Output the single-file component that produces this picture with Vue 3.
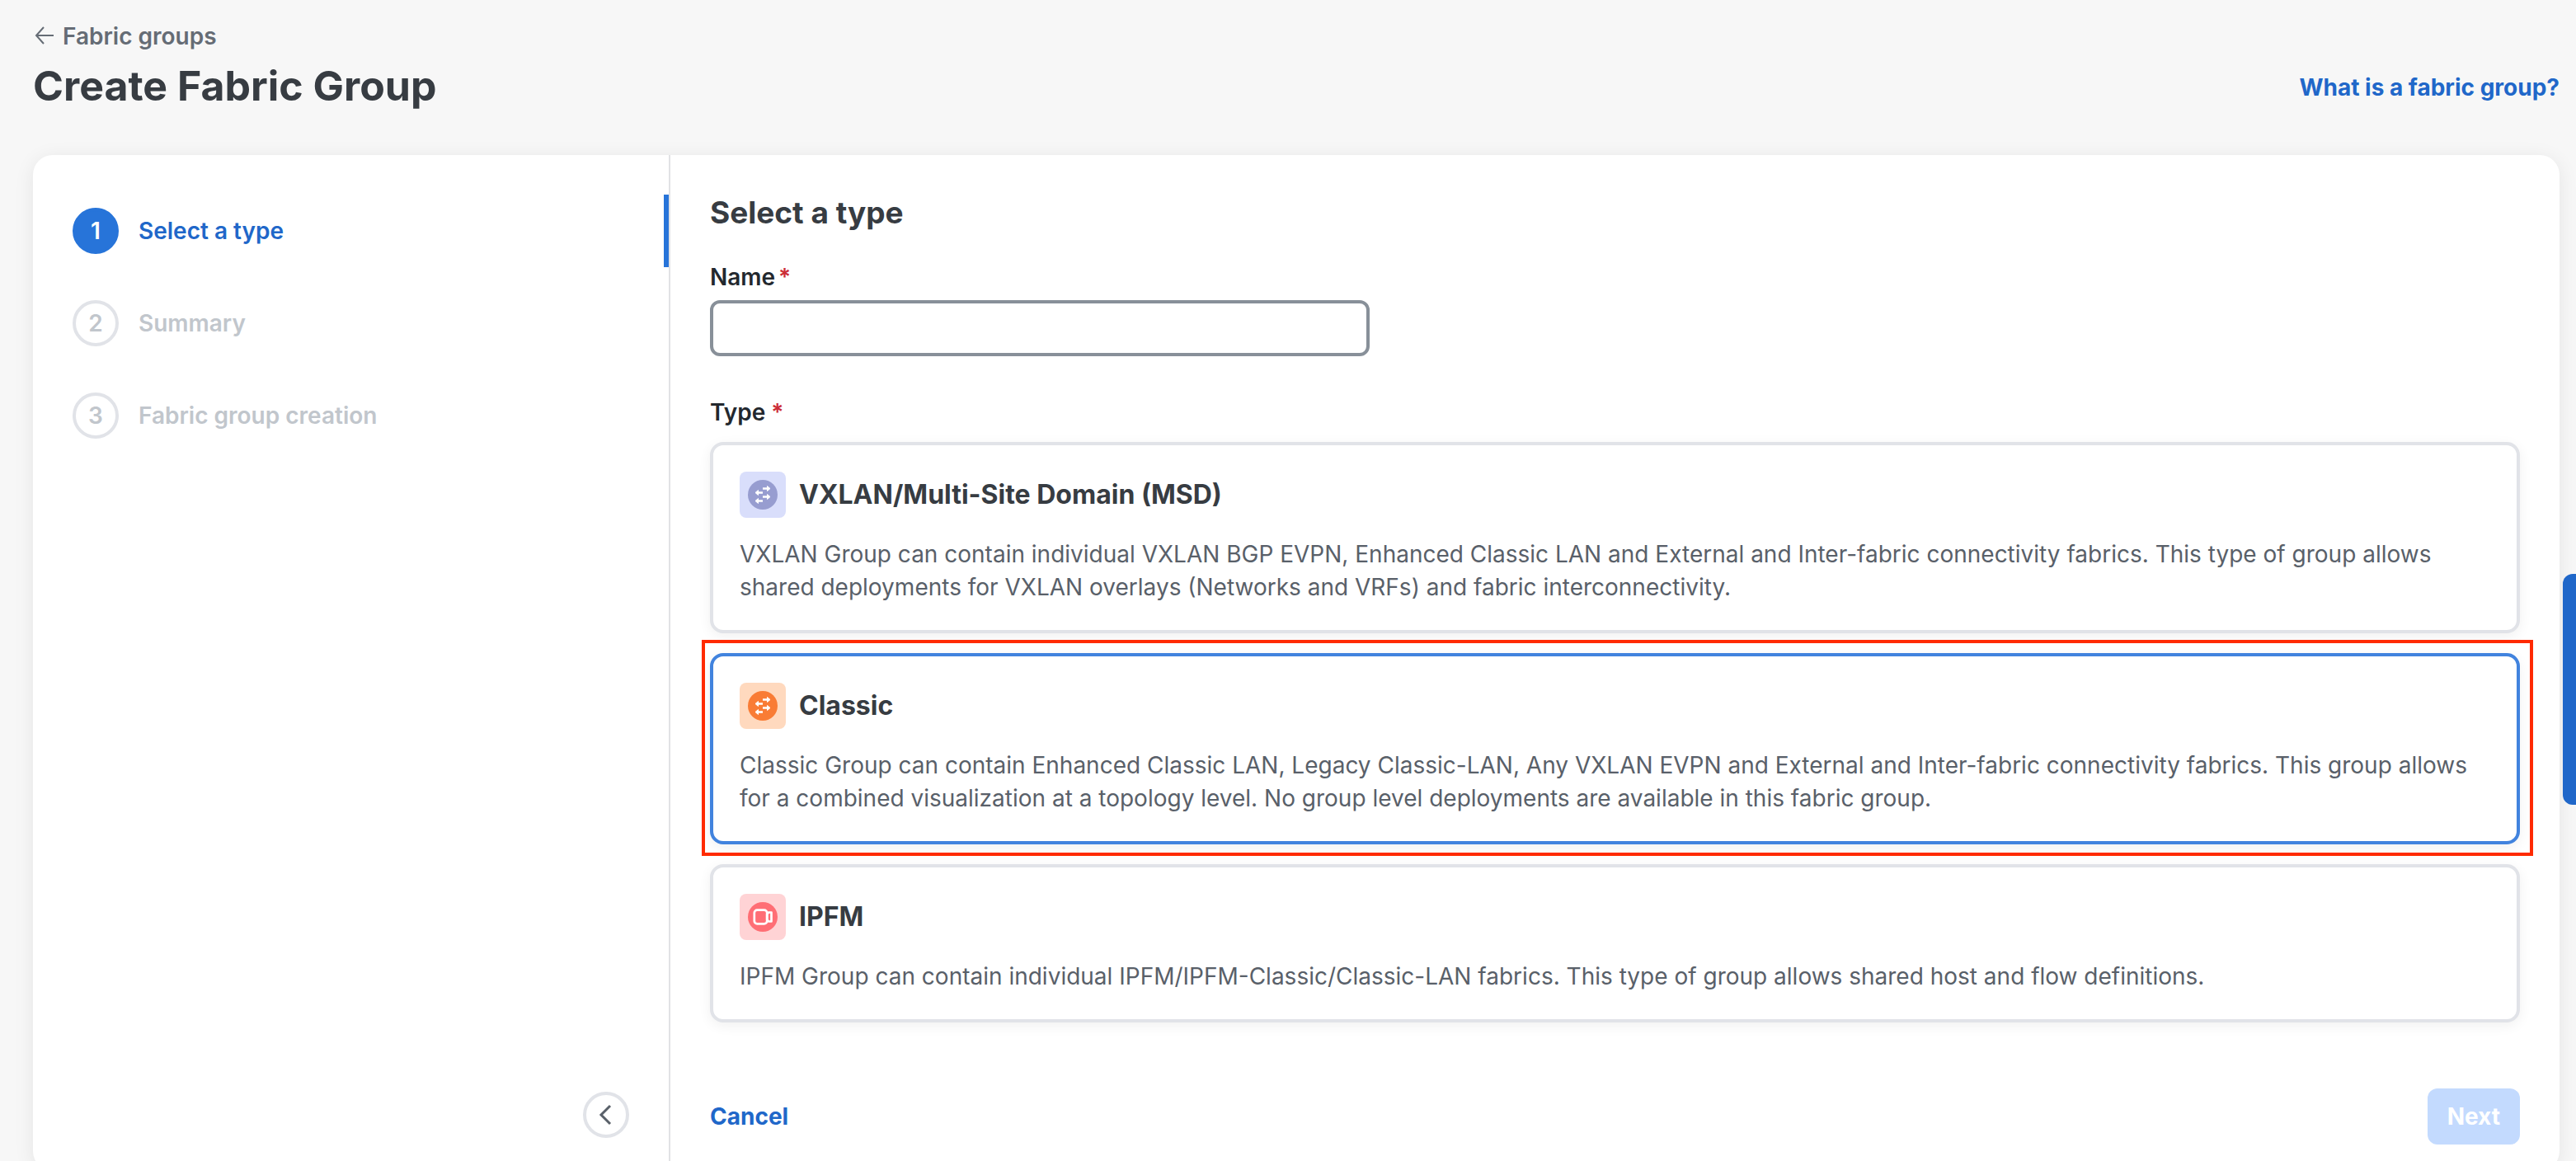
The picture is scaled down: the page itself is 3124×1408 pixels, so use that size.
<script setup>
import { ref } from "vue";

const steps = ["Select a type", "Summary", "Fabric group creation"];
const currentStep = ref(0);

const groupName = ref("");
const selectedType = ref("classic");

const groupTypes = [
  {
    id: "vxlan",
    title: "VXLAN/Multi-Site Domain (MSD)",
    icon: "arrows",
    description:
      "VXLAN Group can contain individual VXLAN BGP EVPN, Enhanced Classic LAN and External and Inter-fabric connectivity fabrics. This type of group allows shared deployments for VXLAN overlays (Networks and VRFs) and fabric interconnectivity.",
  },
  {
    id: "classic",
    title: "Classic",
    icon: "arrows",
    description:
      "Classic Group can contain Enhanced Classic LAN, Legacy Classic-LAN, Any VXLAN EVPN and External and Inter-fabric connectivity fabrics. This group allows for a combined visualization at a topology level. No group level deployments are available in this fabric group.",
  },
  {
    id: "ipfm",
    title: "IPFM",
    icon: "camera",
    description:
      "IPFM Group can contain individual IPFM/IPFM-Classic/Classic-LAN fabrics. This type of group allows shared host and flow definitions.",
  },
];
</script>

<template>
  <div class="page">
    <header class="page-header">
      <div>
        <a class="back-link" href="#">
          <svg class="back-icon" viewBox="0 0 28 28" aria-hidden="true">
            <path d="M25 13H4M13 3L4 13l9 10" />
          </svg>
          Fabric groups
        </a>
        <h1 class="page-title">Create Fabric Group</h1>
      </div>
      <a class="link" href="#">What is a fabric group?</a>
    </header>

    <div class="panel">
      <nav class="sidebar" aria-label="Steps">
        <ol class="steps">
          <li v-for="(step, index) in steps" :key="step" class="step" :class="{ 'step--active': index === currentStep }">
            <span class="step-number">{{ index + 1 }}</span>
            <span>{{ step }}</span>
          </li>
        </ol>
        <button type="button" class="collapse" aria-label="Collapse steps">
          <svg viewBox="0 0 28 28" aria-hidden="true">
            <path d="M19 3L8 14l11 11" />
          </svg>
        </button>
      </nav>

      <form class="main" @submit.prevent>
        <h2 class="main-title">Select a type</h2>

        <label class="label" for="group-name">Name<span class="required required--tight">*</span></label>
        <input id="group-name" v-model="groupName" class="name-input" type="text" />

        <fieldset class="types">
          <legend class="label">Type <span class="required">*</span></legend>
          <label
            v-for="type in groupTypes"
            :key="type.id"
            class="card"
            :class="[`card--${type.id}`, { 'card--selected': selectedType === type.id }]"
          >
            <input v-model="selectedType" class="card-radio" type="radio" name="group-type" :value="type.id" />
            <span class="card-head">
              <span class="card-icon">
                <svg viewBox="0 0 36 36" aria-hidden="true">
                  <circle cx="18" cy="18" r="18" fill="currentColor" />
                  <g v-if="type.icon === 'arrows'" fill="none" stroke="#fff" stroke-width="2.5">
                    <path d="M18 10.5h6M18 15.5h-6M18 20.5h6M18 25.5h-6" />
                    <path
                      d="M23.5 7.5l3.5 3-3.5 3zM12.5 12.5l-3.5 3 3.5 3zM23.5 17.5l3.5 3-3.5 3zM12.5 22.5l-3.5 3 3.5 3z"
                      fill="#fff"
                      stroke-width="1"
                      stroke-linejoin="round"
                    />
                  </g>
                  <g v-else fill="none" stroke="#fff" stroke-width="2.7" stroke-linejoin="round">
                    <rect x="7.8" y="9.6" width="15.4" height="16.8" rx="3.5" />
                    <path d="M23.2 14.5l2-2h3.3v11h-3.3l-2-2z" />
                  </g>
                </svg>
              </span>
              <span class="card-title">{{ type.title }}</span>
            </span>
            <span class="card-text">{{ type.description }}</span>
          </label>
        </fieldset>

        <div class="actions">
          <a class="link" href="#">Cancel</a>
          <button type="submit" class="next" :disabled="!groupName">Next</button>
        </div>
      </form>
    </div>

    <button type="button" class="side-tab" aria-label="Open help"></button>
  </div>
</template>

<style>
body {
  background: #f7f7f7;
}
</style>

<style scoped>
.page {
  display: flex;
  flex-direction: column;
  box-sizing: border-box;
  height: 100vh;
  padding: 24px 20px 0 40px;
  overflow: hidden;
  color: #373c42;
  font-family: Inter, "Liberation Sans", sans-serif;
  font-size: 28px;
  line-height: 40px;
}

.page-header {
  display: flex;
  flex-shrink: 0;
  align-items: flex-end;
  justify-content: space-between;
  padding-bottom: 56px;
}

.back-link {
  display: flex;
  align-items: center;
  gap: 8px;
  color: #656c75;
  font-weight: 600;
  text-decoration: none;
}

.back-icon {
  width: 28px;
  height: 28px;
  fill: none;
  stroke: currentColor;
  stroke-width: 2;
}

.page-title {
  margin: 12px 0 0;
  font-size: 50px;
  font-weight: 700;
  line-height: 56px;
}

.link {
  color: #2067c9;
  font-weight: 700;
  line-height: 52px;
  text-decoration: none;
}

/* Panel */
.panel {
  display: flex;
  flex-shrink: 0;
  border-radius: 24px;
  background: #fff;
  box-shadow: 0 4px 24px rgba(0, 0, 0, 0.08);
}

.sidebar {
  display: flex;
  flex: 0 0 771px;
  flex-direction: column;
  justify-content: space-between;
  border-right: 2px solid #e1e2e5;
}

.steps {
  display: flex;
  flex-direction: column;
  gap: 24px;
  margin: 0;
  padding: 48px 0 0;
  list-style: none;
}

.step {
  display: flex;
  align-items: center;
  gap: 24px;
  height: 88px;
  padding-left: 48px;
  border-right: 6px solid transparent;
  color: #c1c6cc;
  font-weight: 600;
}

.step--active {
  border-color: #2774d9;
  color: #2067c9;
}

.step-number {
  box-sizing: border-box;
  width: 56px;
  height: 56px;
  border: 4px solid #e1e3e8;
  border-radius: 50%;
  line-height: 48px;
  text-align: center;
}

.step--active .step-number {
  border-color: #2774d9;
  background: #2774d9;
  color: #fff;
}

.collapse {
  display: flex;
  align-items: center;
  justify-content: center;
  align-self: flex-end;
  width: 56px;
  height: 56px;
  margin: 0 48px 40px;
  padding: 0;
  border: 4px solid #e1e3e8;
  border-radius: 50%;
  background: #fff;
  color: #596069;
}

.collapse svg {
  width: 28px;
  height: 28px;
  fill: none;
  stroke: currentColor;
  stroke-width: 3;
}

/* Form */
.main {
  display: flex;
  flex: 1;
  flex-direction: column;
  align-items: flex-start;
  padding: 48px 48px 32px;
}

.main-title {
  margin: 0 0 36px;
  font-size: 37px;
  font-weight: 700;
  line-height: 44px;
}

.label {
  padding: 0;
  color: #23282e;
  font-weight: 600;
}

.required {
  color: #cc2d37;
}

.required--tight {
  margin-left: 4px;
}

.name-input {
  box-sizing: border-box;
  width: 800px;
  max-width: 100%;
  height: 68px;
  margin-top: 8px;
  padding: 0 20px;
  border: 4px solid #889099;
  border-radius: 12px;
  background: #fff;
  font: inherit;
}

.types {
  display: flex;
  flex-direction: column;
  gap: 24px;
  align-self: stretch;
  min-width: 0;
  margin: 48px 0 0;
  padding: 0;
  border: 0;
}

.types .label {
  margin-bottom: 16px;
}

.card {
  position: relative;
  display: flex;
  flex-direction: column;
  gap: 24px;
  padding: 32px;
  border: 4px solid #e1e3e8;
  border-radius: 16px;
  background: #fff;
  box-shadow: 0 4px 16px rgba(0, 0, 0, 0.06);
  cursor: pointer;
}

.card--selected {
  border-color: #4183de;
}

/* Callout frame around the selected card */
.card--selected::after {
  content: "";
  position: absolute;
  inset: -20px -20px -18px -14px;
  border: 4px solid #ff2a00;
  pointer-events: none;
}

.card-radio {
  position: absolute;
  margin: 0;
  opacity: 0;
}

.card-head {
  display: flex;
  align-items: center;
  gap: 16px;
}

.card-icon {
  display: flex;
  align-items: center;
  justify-content: center;
  width: 56px;
  height: 56px;
  border-radius: 8px;
}

.card-icon svg {
  width: 36px;
  height: 36px;
}

.card--vxlan .card-icon {
  background: #d9defb;
  color: #979dd0;
}

.card--classic .card-icon {
  background: #ffd9be;
  color: #f97c35;
}

.card--ipfm .card-icon {
  background: #ffd3d5;
  color: #ff6e75;
}

.card-title {
  font-size: 32px;
  font-weight: 700;
}

.card-text {
  color: #596069;
}

.actions {
  display: flex;
  align-items: center;
  align-self: stretch;
  justify-content: space-between;
  margin-top: 80px;
}

.next {
  height: 68px;
  padding: 0 24px;
  border: 0;
  border-radius: 12px;
  background: #2774d9;
  color: #fff;
  font: inherit;
  font-weight: 700;
}

.next:disabled {
  background: #c3dafe;
}

.side-tab {
  position: fixed;
  top: 696px;
  right: 0;
  width: 16px;
  height: 280px;
  padding: 0;
  border: 0;
  border-radius: 12px 0 0 12px;
  background: #2067c9;
}
</style>
